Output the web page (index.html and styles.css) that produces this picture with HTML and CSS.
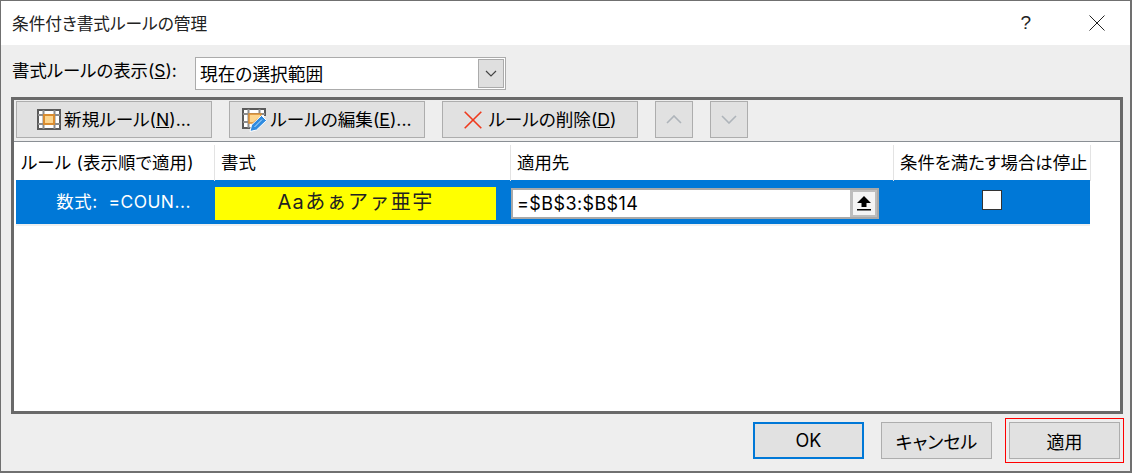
FILE: index.html
```html
<!DOCTYPE html>
<html lang="ja">
<head>
    <meta charset="UTF-8">
    <title>条件付き書式ルールの管理</title>
    <link rel="stylesheet" href="styles.css">
</head>
<body>
    <div class="dialog">
        <!-- Title bar -->
        <div class="titlebar">
            <span class="title">条件付き書式ルールの管理</span>
            <span class="help">?</span>
            <svg class="close" width="16" height="16" viewBox="0 0 16 16">
                <path d="M0.5 0.5L15.5 15.5M15.5 0.5L0.5 15.5" stroke="#222" stroke-width="1" fill="none"/>
            </svg>
        </div>

        <div class="content">
            <!-- Scope -->
            <div class="scope">
                <span class="scope-label">書式ルールの表示(<u>S</u>):</span>
                <div class="select">
                    <span class="select-value">現在の選択範囲</span>
                    <span class="select-arrow">
                        <svg width="12" height="7" viewBox="0 0 12 7">
                            <path d="M1 1L6 6L11 1" stroke="#444" stroke-width="1.2" fill="none"/>
                        </svg>
                    </span>
                </div>
            </div>

            <!-- Rules panel -->
            <div class="panel">
                <div class="toolbar">
                    <button class="btn btn-tool">
                        <svg width="24" height="21" viewBox="0 0 24 21">
                            <rect x="1" y="1" width="22" height="19" fill="#fff" stroke="#5a5a5a" stroke-width="2"/>
                            <path d="M1 6H23M1 15H23M6.5 1V20M17.5 1V20" stroke="#8c8c8c" stroke-width="2" fill="none"/>
                            <rect x="7" y="6" width="10" height="9" fill="#fdd68f" stroke="#d98c30" stroke-width="2"/>
                        </svg>
                        <span>新規ルール(<u>N</u>)...</span>
                    </button>
                    <button class="btn btn-tool btn-edit">
                        <svg width="25" height="24" viewBox="0 0 25 24">
                            <path d="M14 20H1V1H23V8" fill="#fff" stroke="#5a5a5a" stroke-width="2"/>
                            <path d="M1 6H23M1 14H8M6.5 1V20M17.5 1V6" stroke="#8c8c8c" stroke-width="2" fill="none"/>
                            <path d="M7 6H19V9L11 15H7Z" fill="#fdd68f" stroke="#d98c30" stroke-width="1.5"/>
                            <path d="M8 23.5L9.5 17L19.5 7.5L24.5 12.5L14.5 22Z" fill="#2f8be0" stroke="#fff" stroke-width="1"/>
                            <path d="M12.5 19L20 11.5" stroke="#bfe0fa" stroke-width="1" fill="none"/>
                        </svg>
                        <span>ルールの編集(<u>E</u>)...</span>
                    </button>
                    <button class="btn btn-tool btn-delete">
                        <svg width="18" height="18" viewBox="0 0 18 18">
                            <path d="M0.7 0.7L17.3 17.3M17.3 0.7L0.7 17.3" stroke="#ef3a1d" stroke-width="1.6" fill="none"/>
                        </svg>
                        <span>ルールの削除(<u>D</u>)</span>
                    </button>
                    <button class="btn btn-arrow">
                        <svg width="16" height="9" viewBox="0 0 16 9">
                            <path d="M1 8L8 1L15 8" stroke="#aeb4ba" stroke-width="1.6" fill="none"/>
                        </svg>
                    </button>
                    <button class="btn btn-arrow">
                        <svg width="16" height="9" viewBox="0 0 16 9">
                            <path d="M1 1L8 8L15 1" stroke="#aeb4ba" stroke-width="1.6" fill="none"/>
                        </svg>
                    </button>
                </div>

                <div class="list">
                    <div class="list-head">
                        <div class="head-cell head-rule">ルール (表示順で適用)</div>
                        <div class="head-cell">書式</div>
                        <div class="head-cell">適用先</div>
                        <div class="head-cell">条件を満たす場合は停止</div>
                    </div>
                    <div class="rule-row">
                        <div class="rule-name">数式:&nbsp; =COUN...</div>
                        <div class="rule-format">Aaあぁアァ亜宇</div>
                        <div class="rule-range">
                            <div class="range-input">
                                <span class="range-value">=$B$3:$B$14</span>
                                <span class="range-btn">
                                    <svg width="14" height="15" viewBox="0 0 14 15">
                                        <path d="M7 0L14 7H9.5V11H4.5V7H0Z" fill="#000"/>
                                        <rect x="0" y="13" width="14" height="1.5" fill="#000"/>
                                    </svg>
                                </span>
                            </div>
                        </div>
                        <div class="rule-stop"><span class="checkbox"></span></div>
                    </div>
                </div>
            </div>

            <!-- Footer buttons -->
            <div class="footer">
                <button class="btn btn-foot btn-default">OK</button>
                <button class="btn btn-foot">キャンセル</button>
                <button class="btn btn-foot btn-marked">適用</button>
            </div>
        </div>
    </div>
</body>
</html>
```

FILE: styles.css
```css
/* General */
html, body {
    margin: 0;
    padding: 0;
}

body {
    font-family: Inter, "Noto Sans CJK JP", sans-serif;
    font-size: 18px;
    font-feature-settings: "palt";
    color: #000;
}

.dialog {
    box-sizing: border-box;
    width: 1132px;
    height: 473px;
    border: solid #707070;
    border-width: 1px 2px 2px 1px;
    background-color: #eeeeee;
    display: flex;
    flex-direction: column;
}

/* Title bar */
.titlebar {
    height: 44px;
    flex: none;
    background-color: #fff;
    display: flex;
    align-items: center;
    padding-left: 11px;
}

.title {
    flex: 1;
    font-size: 16.7px;
    color: #222;
}

.help {
    font-family: "Liberation Sans", sans-serif;
    font-size: 19px;
    color: #222;
    margin-right: 58px;
}

.close {
    margin-right: 25px;
}

/* Scope select */
.content {
    flex: 1;
    padding: 12px 7px 0 10px;
    display: flex;
    flex-direction: column;
}

.scope {
    display: flex;
    align-items: center;
    height: 33px;
}

.scope-label {
    width: 184px;
    padding-left: 1px;
    box-sizing: border-box;
    font-size: 17.4px;
    margin-top: -9px;
}

.select {
    box-sizing: border-box;
    width: 311px;
    height: 33px;
    background: #fff;
    border: 1px solid #ababab;
    display: flex;
    align-items: center;
    justify-content: space-between;
    padding: 1px;
}

.select-value {
    padding-left: 3px;
    font-size: 17.7px;
    margin-top: -2px;
}

.select-arrow {
    box-sizing: border-box;
    width: 26px;
    height: 29px;
    background: #dfdfdf;
    border: 1px solid #ababab;
    display: flex;
    align-items: center;
    justify-content: center;
}

/* Panel */
.panel {
    box-sizing: border-box;
    width: 1112px;
    height: 317px;
    margin-top: 7px;
    border: 3px solid #696969;
    display: flex;
    flex-direction: column;
}

.toolbar {
    box-sizing: border-box;
    height: 41px;
    padding: 1px 0 0 2px;
    display: flex;
    gap: 17px;
}

.btn {
    box-sizing: border-box;
    height: 37px;
    margin: 0;
    padding: 0;
    background-color: #e1e1e1;
    border: 1px solid #adadad;
    font-family: inherit;
    font-size: 18px;
    font-feature-settings: inherit;
    color: #000;
    display: flex;
    align-items: center;
    justify-content: center;
}

.btn-tool {
    width: 196px;
    gap: 3px;
    font-size: 17.6px;
}

.btn-tool span {
    margin-top: -2px;
}

.btn-delete {
    gap: 7px;
}

.btn-arrow {
    width: 38px;
}

/* Rule list */
.list {
    flex: 1;
    background-color: #fff;
    border-top: 1px solid #8a8f94;
    padding-top: 3px;
}

.list-head {
    display: grid;
    grid-template-columns: 201px 296px 383px 197px;
    height: 35px;
}

.head-cell {
    padding-left: 6px;
    border-right: 1px solid #e3e3e3;
    font-size: 17.4px;
    line-height: 36px;
    white-space: nowrap;
}

.head-rule {
    padding-left: 7px;
    letter-spacing: 0.2px;
}

.rule-row {
    margin-left: 2px;
    width: 1074px;
    height: 44px;
    background-color: #0078d7;
    border-bottom: 2px solid #efefef;
    display: grid;
    grid-template-columns: 199px 296px 383px 196px;
}

.rule-name {
    color: #fff;
    font-size: 17.4px;
    letter-spacing: 0.5px;
    line-height: 44px;
    text-align: right;
    padding-right: 24px;
    white-space: nowrap;
}

.rule-format {
    background-color: #ffff00;
    width: 281px;
    height: 33px;
    margin-top: 7px;
    text-align: center;
    font-size: 20px;
    font-feature-settings: normal;
    line-height: 30px;
    letter-spacing: 1.4px;
    color: #222;
}

.rule-range {
    padding-top: 8px;
}

.range-input {
    box-sizing: border-box;
    width: 368px;
    height: 31px;
    background: #fff;
    border: 2px solid #a9a9a9;
    display: flex;
    align-items: center;
    justify-content: space-between;
}

.range-value {
    padding-left: 4px;
    letter-spacing: 0.4px;
}

.range-btn {
    box-sizing: border-box;
    width: 27px;
    height: 27px;
    background: #f4f4f4;
    border: 2px solid #bdbdbd;
    border-left-width: 3px;
    display: flex;
    align-items: center;
    justify-content: center;
}

.rule-stop {
    display: flex;
    justify-content: center;
    padding-top: 10px;
    padding-right: 1px;
}

.checkbox {
    box-sizing: border-box;
    width: 20px;
    height: 20px;
    background: #fff;
    border: 1px solid #333;
}

/* Footer */
.footer {
    display: flex;
    justify-content: flex-end;
    gap: 17px;
    padding: 8px 3px 0 0;
}

.btn-foot {
    width: 111px;
}

.btn-default {
    border: 2px solid #0078d7;
}

.btn-marked {
    outline: 1px solid #ff0000;
    outline-offset: 3px;
}
```
